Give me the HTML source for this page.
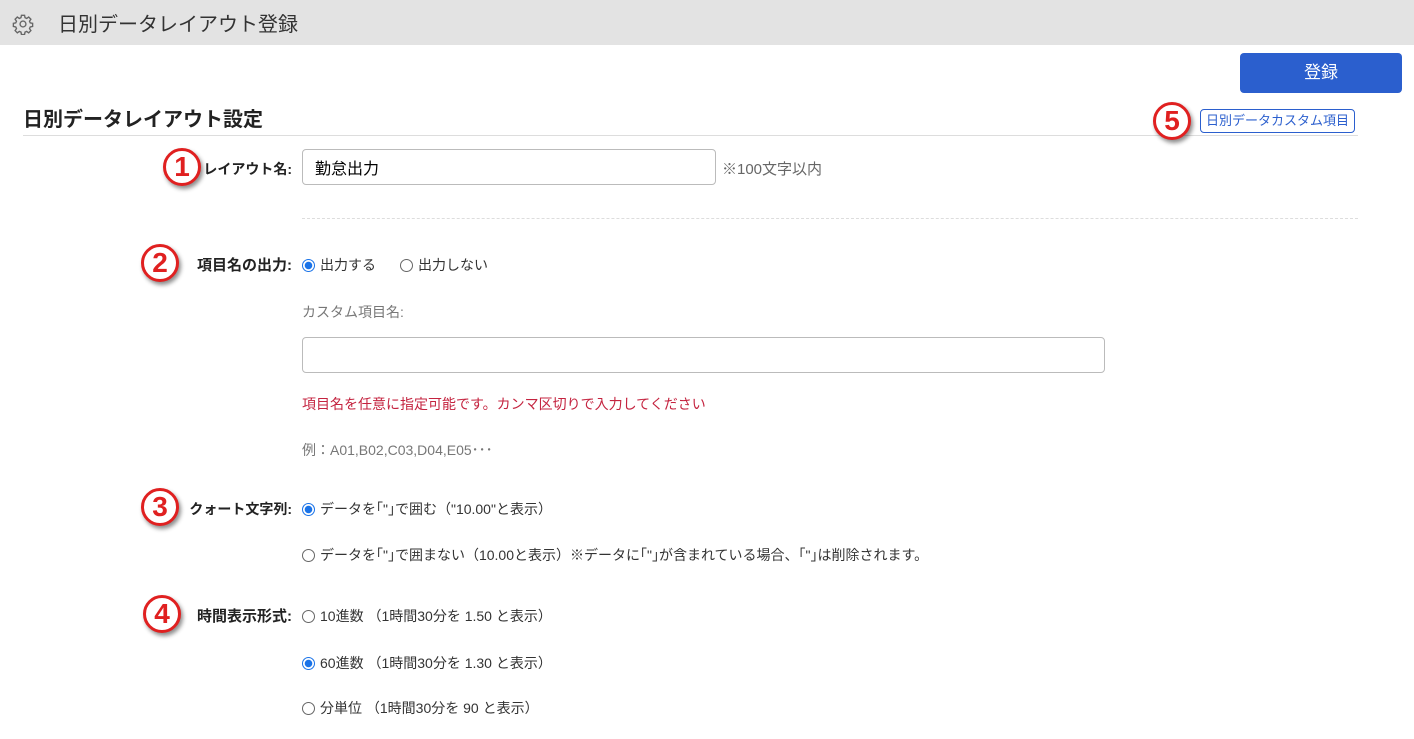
<!DOCTYPE html>
<html><head><meta charset="utf-8"><style>
body{margin:0;width:1414px;height:739px;overflow:hidden;background:#fff;font-family:"Liberation Sans","Noto Sans CJK JP",sans-serif;color:#333;position:relative}
.a{position:absolute;white-space:nowrap}
.hdr{position:absolute;left:0;top:0;width:1414px;height:45px;background:#e3e3e3}
.num{position:absolute;z-index:2;width:32px;height:32px;border:3px solid #e02020;border-radius:50%;background:#fff;color:#e02020;font-weight:bold;font-size:28px;line-height:32px;text-align:center;box-shadow:2px 3px 4px rgba(0,0,0,.45);font-family:"Liberation Sans",sans-serif}
.lbl{font-weight:bold;font-size:15px;color:#222;right:1122px;text-align:right}
.t{font-size:14px;color:#333}
.r{display:inline-block;width:13px;height:13px;border:1px solid #666;border-radius:50%;vertical-align:-2px;margin-right:5px;box-sizing:border-box}
.r.on{border:1px solid #1a73e8;background:radial-gradient(circle,#1a73e8 3.5px,#fff 4px)}
input{position:absolute;border:1px solid #bbb;border-radius:4px;font-size:16px;padding:0 12px;box-sizing:border-box;font-family:inherit}
</style></head><body>
<div class="hdr"></div>
<svg class="a" style="left:12px;top:13px" width="22" height="22" viewBox="0 0 24 24" fill="none" stroke="#666" stroke-width="1.5"><circle cx="12" cy="12" r="3.2"/><path d="M10.3 2.5h3.4l.5 2.6 1.8.8 2.2-1.5 2.4 2.4-1.5 2.2.8 1.8 2.6.5v3.4l-2.6.5-.8 1.8 1.5 2.2-2.4 2.4-2.2-1.5-1.8.8-.5 2.6h-3.4l-.5-2.6-1.8-.8-2.2 1.5-2.4-2.4 1.5-2.2-.8-1.8-2.6-.5v-3.4l2.6-.5.8-1.8-1.5-2.2 2.4-2.4 2.2 1.5 1.8-.8z"/></svg>
<div class="a" style="left:58px;top:8px;font-size:20px;color:#333">日別データレイアウト登録</div>
<div class="a" style="left:1240px;top:53px;width:162px;height:40px;background:#2b5fce;border-radius:4px;color:#fff;font-size:17px;line-height:40px;text-align:center">登録</div>
<div class="a" style="left:23px;top:103px;font-size:20px;font-weight:bold;color:#222">日別データレイアウト設定</div>
<div class="a" style="left:23px;top:135px;width:1335px;height:1px;background:#ddd"></div>
<div class="a" style="left:1200px;top:109px;height:22px;padding:0 5px;border:1px solid #2b5fce;border-radius:4px;color:#2b5fce;font-size:13px;line-height:22px">日別データカスタム項目</div>
<div class="num" style="left:1153px;top:102px">5</div>

<div class="num" style="left:163px;top:148px">1</div>
<div class="a lbl" style="top:159px;font-size:14px">レイアウト名:</div>
<input style="left:302px;top:149px;width:414px;height:36px" value="勤怠出力">
<div class="a t" style="left:722px;top:158px;color:#666;font-size:15px">※100文字以内</div>
<div class="a" style="left:302px;top:218px;width:1056px;border-top:1px dashed #ddd"></div>

<div class="num" style="left:141px;top:244px">2</div>
<div class="a lbl" style="top:254px">項目名の出力:</div>
<div class="a t" style="left:302px;top:255px"><span class="r on"></span>出力する<span style="display:inline-block;width:24px"></span><span class="r"></span>出力しない</div>
<div class="a t" style="left:302px;top:302px;color:#777">カスタム項目名:</div>
<input style="left:302px;top:337px;width:803px;height:36px">
<div class="a t" style="left:302px;top:394px;color:#c4233f">項目名を任意に指定可能です。カンマ区切りで入力してください</div>
<div class="a t" style="left:302px;top:440px;color:#777">例：A01,B02,C03,D04,E05･･･</div>

<div class="num" style="left:141px;top:488px">3</div>
<div class="a lbl" style="top:499px;font-size:14px">クォート文字列:</div>
<div class="a t" style="left:302px;top:499px"><span class="r on"></span>データを｢"｣で囲む（"10.00"と表示）</div>
<div class="a t" style="left:302px;top:545px"><span class="r"></span>データを｢"｣で囲まない（10.00と表示）※データに｢"｣が含まれている場合、｢"｣は削除されます。</div>

<div class="num" style="left:143px;top:595px">4</div>
<div class="a lbl" style="top:605px">時間表示形式:</div>
<div class="a t" style="left:302px;top:606px"><span class="r"></span>10進数 （1時間30分を 1.50 と表示）</div>
<div class="a t" style="left:302px;top:653px"><span class="r on"></span>60進数 （1時間30分を 1.30 と表示）</div>
<div class="a t" style="left:302px;top:698px"><span class="r"></span>分単位 （1時間30分を 90 と表示）</div>
</body></html>
